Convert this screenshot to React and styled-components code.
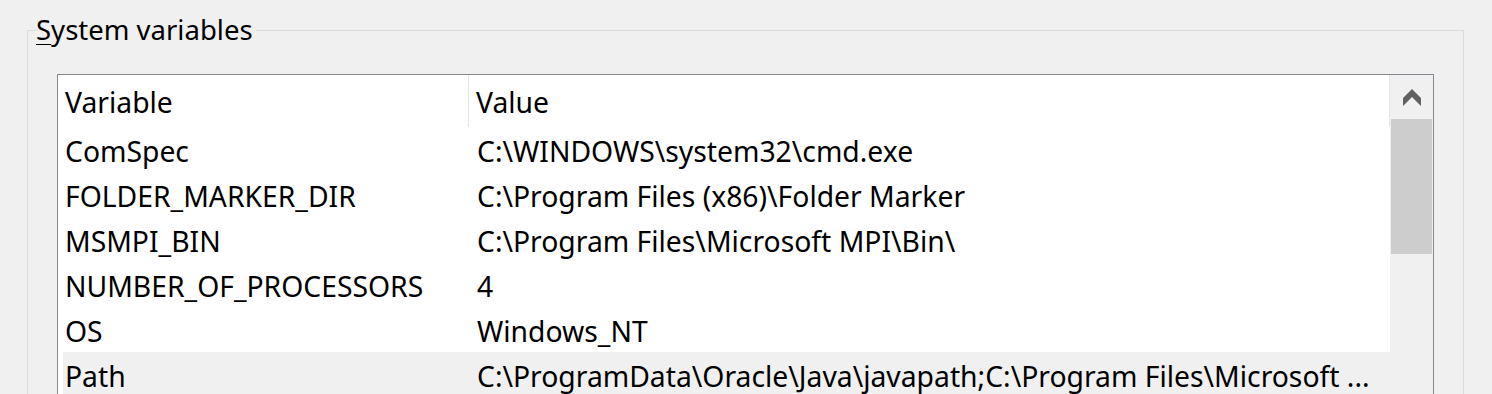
import React from 'react';
import styled, { createGlobalStyle } from 'styled-components';

const GlobalStyle = createGlobalStyle`
	html,
	body {
		margin: 0;
		padding: 0;
		background: #f0f0f0;
		overflow: hidden;
	}
	body {
		font-family: 'Noto Sans', 'Open Sans', sans-serif;
		color: #000;
	}
`;

const variables = [
	{ name: 'ComSpec', value: 'C:\\WINDOWS\\system32\\cmd.exe' },
	{ name: 'FOLDER_MARKER_DIR', value: 'C:\\Program Files (x86)\\Folder Marker' },
	{ name: 'MSMPI_BIN', value: 'C:\\Program Files\\Microsoft MPI\\Bin\\' },
	{ name: 'NUMBER_OF_PROCESSORS', value: '4' },
	{ name: 'OS', value: 'Windows_NT' },
	{
		name: 'Path',
		value: 'C:\\ProgramData\\Oracle\\Java\\javapath;C:\\Program Files\\Microsoft ...',
		selected: true,
	},
];

const Page = styled.div`
	height: 394px;
	padding: 14px 28px 0 27px;
	box-sizing: border-box;
`;

const GroupBox = styled.fieldset`
	margin: 0;
	padding: 0 0 0 8px;
	border: 1px solid #dcdcdc;
	height: 420px;
	box-sizing: border-box;
	width: 1437px;
`;

const Legend = styled.legend`
	padding: 0 3px 0 0;
	font-size: 27.5px;
	line-height: 32px;

	u {
		text-decoration-thickness: 1px;
		text-underline-offset: 4px;
	}
`;

const ListBox = styled.div`
	margin: 28px 0 0 21px;
	border: 1px solid #828790;
	background: #fff;
	display: flex;
	height: 360px;
	width: 1377px;
	box-sizing: border-box;
`;

const Table = styled.div`
	flex: 1;
	display: flex;
	flex-direction: column;
	font-size: 28.3px;
`;

const HeaderRow = styled.div`
	display: grid;
	grid-template-columns: 411px 1fr;
	height: 52px;
`;

const HeaderCell = styled.div`
	display: flex;
	align-items: center;
	padding: 2px 0 0 7px;
	border-right: 1px solid #e5e5e5;
	white-space: nowrap;
`;

const Row = styled.div`
	display: grid;
	grid-template-columns: 406px 1fr;
	height: 45px;
	align-items: center;
	margin-left: 5px;
	padding-top: 2px;
	box-sizing: border-box;
	background: ${(p) => (p.selected ? '#f0f0f0' : 'transparent')};
`;

const Cell = styled.div`
	padding-left: ${(p) => (p.first ? '2px' : '8px')};
	white-space: nowrap;
`;

const ScrollBar = styled.div`
	width: 43px;
	background: #f0f0f0;
	display: flex;
	flex-direction: column;
`;

const ScrollButton = styled.div`
	height: 44px;
	display: flex;
	align-items: center;
	justify-content: center;
`;

const Thumb = styled.div`
	height: 135px;
	margin: 0 1px;
	background: #cdcdcd;
`;

const ChevronUp = () => (
	<svg width="18" height="17" viewBox="0 0 18 17">
		<path d="M0 9 L9 0 L18 9 L18 17 L9 8 L0 17 Z" fill="#606060" />
	</svg>
);

const App = () => (
	<>
		<GlobalStyle />
		<Page>
			<GroupBox>
				<Legend>
					<u>S</u>ystem variables
				</Legend>
				<ListBox>
					<Table>
						<HeaderRow>
							<HeaderCell>Variable</HeaderCell>
							<HeaderCell>Value</HeaderCell>
						</HeaderRow>
						{variables.map((v) => (
							<Row key={v.name} selected={v.selected}>
								<Cell first>{v.name}</Cell>
								<Cell>{v.value}</Cell>
							</Row>
						))}
					</Table>
					<ScrollBar>
						<ScrollButton>
							<ChevronUp />
						</ScrollButton>
						<Thumb />
					</ScrollBar>
				</ListBox>
			</GroupBox>
		</Page>
	</>
);

export default App;
